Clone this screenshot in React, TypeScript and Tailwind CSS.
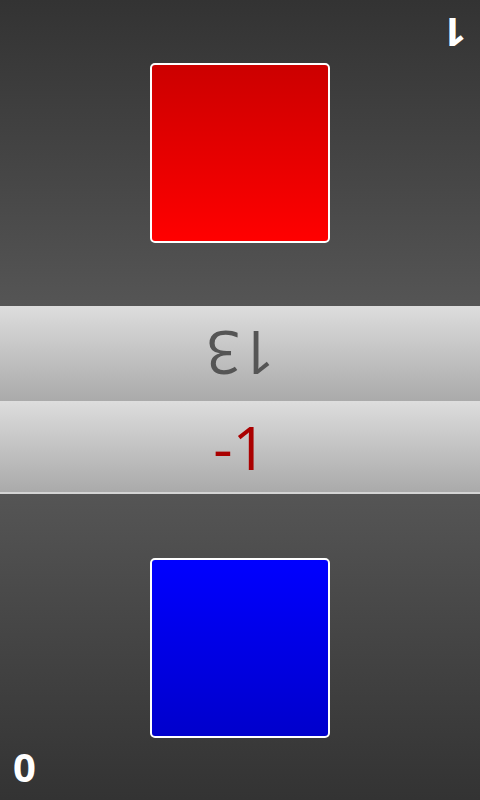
export default function App() {
  return (
    <div className="flex h-[800px] w-[480px] flex-col overflow-hidden" style={{ fontFamily: '"Open Sans", "Noto Sans", sans-serif' }}>
      {/* oberer Spieler (gedreht) */}
      <div className="relative flex h-[306px] items-start justify-center bg-gradient-to-b from-[#333333] to-[#555555] pt-[63px]">
        <div className="h-[180px] w-[180px] rounded-[5px] border-2 border-white bg-gradient-to-b from-[#cc0000] to-[#ff0000]" />
        <span className="absolute right-[14px] top-[13px] rotate-180 text-[40px] leading-none font-bold text-white">1</span>
      </div>

      <div className="flex h-[95px] items-center justify-center bg-gradient-to-b from-[#dddddd] to-[#aaaaaa]">
        <span className="rotate-180 text-[60px] leading-none text-[#555555]">13</span>
      </div>
      <div className="flex h-[91px] items-center justify-center bg-gradient-to-b from-[#dddddd] to-[#aaaaaa]">
        <span className="text-[60px] leading-none text-[#aa0000]">-1</span>
      </div>
      <div className="h-[2px] bg-[#d4d4d4]" />

      {/* unterer Spieler */}
      <div className="relative flex flex-1 items-start justify-center bg-gradient-to-b from-[#555555] to-[#333333] pt-[64px]">
        <div className="h-[180px] w-[180px] rounded-[5px] border-2 border-white bg-gradient-to-b from-[#0000ff] to-[#0000cc]" />
        <span className="absolute bottom-[13px] left-[13px] text-[40px] leading-none font-bold text-white">0</span>
      </div>
    </div>
  );
}
